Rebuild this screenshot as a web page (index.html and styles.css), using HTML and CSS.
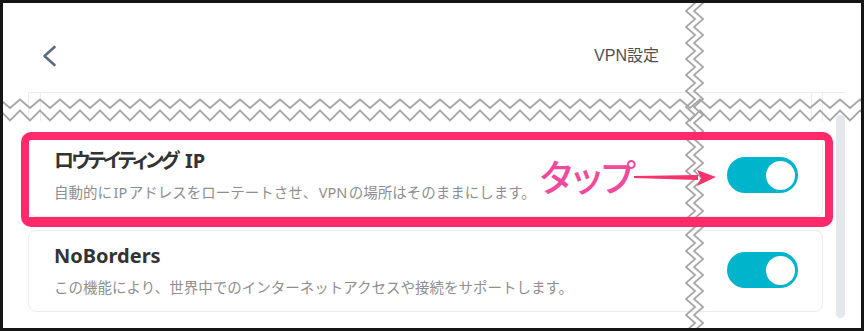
FILE: index.html
```html
<!DOCTYPE html>
<html lang="ja">
<head>
<meta charset="utf-8">
<title>VPN設定</title>
<link rel="stylesheet" href="styles.css">
</head>
<body>
<div class="frame">
  <header class="header">
    <svg class="back" width="18" height="24" viewBox="0 0 18 24"><path d="M14.5 3 L4.5 12 L14.5 21" fill="none" stroke="#5b6b7e" stroke-width="2.6" stroke-linecap="round" stroke-linejoin="round"/></svg>
    <div class="title">VPN設定</div>
  </header>
  <div class="content">
    <div class="cards">
      <div class="prev"><div class="prev-inner"></div></div>
      <div class="card card-first">
        <div class="text">
          <div class="name"><span class="kana">ロウテイティング</span> IP</div>
          <div class="desc">自動的に<span class="lat">IP</span>アドレスをローテートさせ、<span class="lat">VPN</span>の場所はそのままにします。</div>
        </div>
        <div class="toggle"><span class="knob"></span></div>
      </div>
      <div class="card">
        <div class="text">
          <div class="name">NoBorders</div>
          <div class="desc">この機能により、世界中でのインターネットアクセスや接続をサポートします。</div>
        </div>
        <div class="toggle"><span class="knob"></span></div>
      </div>
    </div>
    <div class="scrollbar"></div>
  </div>

  <svg class="tear-h" width="858" height="27">
    <defs>
      <pattern id="zzh" patternUnits="userSpaceOnUse" x="17" y="0" width="20" height="27">
        <path d="M-10 10 L0 1.5 L10 10 L20 1.5 L30 10" fill="none" stroke="#a6a6a6" stroke-width="1.8"/>
        <path d="M-10 22.5 L0 12.5 L10 22.5 L20 12.5 L30 22.5" fill="none" stroke="#a6a6a6" stroke-width="1.8"/>
      </pattern>
    </defs>
    <rect x="0" y="0" width="858" height="27" fill="url(#zzh)"/>
  </svg>

  <svg class="tear-v" width="26" height="325">
    <defs>
      <pattern id="zzv" patternUnits="userSpaceOnUse" x="0" y="0" width="26" height="16">
        <path d="M4 -8 L13 0 L4 8 L13 16 L4 24" fill="none" stroke="#a6a6a6" stroke-width="1.8"/>
        <path d="M12 -8 L21 0 L12 8 L21 16 L12 24" fill="none" stroke="#a6a6a6" stroke-width="1.8"/>
      </pattern>
    </defs>
    <rect x="0" y="0" width="26" height="325" fill="url(#zzv)"/>
  </svg>

  <div class="ring"></div>
  <div class="tap">タップ</div>
  <svg class="arrow" width="90" height="27" viewBox="0 0 90 27">
    <polygon points="4,11 68,10 68,15 4,13" fill="#f7336b"/>
    <polygon points="67,5 86,12 67,21 71,13" fill="#f7336b"/>
  </svg>
</div>
</body>
</html>
```

FILE: styles.css
```css
* { box-sizing: border-box; }

html, body {
  margin: 0;
  padding: 0;
  background: #ffffff;
}

body {
  font-family: "Liberation Sans", "Noto Sans CJK JP", sans-serif;
}

.frame {
  position: relative;
  width: 864px;
  height: 331px;
  border: 3px solid #151515;
  background: #ffffff;
  overflow: hidden;
}

.header {
  display: flex;
  align-items: center;
  height: 89px;
  padding: 16px 0 0 37px;
}

.back {
  display: block;
}

.title {
  margin-left: auto;
  margin-right: 202px;
  font-size: 16px;
  color: #505050;
  line-height: 20px;
}

.content {
  display: flex;
  margin-left: 25px;
  width: 817px;
  border-top: 1px solid #ebebf1;
}

.cards {
  width: 795px;
  display: flex;
  flex-direction: column;
}

.prev {
  height: 28px;
  border-left: 1px solid #ececf2;
  border-right: 1px solid #ececf2;
}

.prev-inner {
  height: 100%;
  margin: 0 10px 0 11px;
  border-left: 1px solid #ececf2;
  border-right: 1px solid #ececf2;
}

.card {
  display: flex;
  align-items: flex-start;
  height: 82px;
  margin-top: 13px;
  padding: 13px 24px 0 25px;
  border: 1px solid #ececf1;
  border-radius: 8px;
  background: #ffffff;
}

.card-first {
  margin-top: 14px;
}

.name {
  font-family: "Noto Sans", "Noto Sans CJK JP", sans-serif;
  font-feature-settings: "palt";
  font-size: 20px;
  line-height: 24px;
  font-weight: 700;
  color: #333333;
}

.kana {
  letter-spacing: -2.9px;
  margin-right: 3px;
}

.desc {
  margin-top: 9px;
  font-family: "Noto Sans", "Noto Sans CJK JP", sans-serif;
  font-size: 14.5px;
  line-height: 20px;
  color: #8e8e8e;
}

.lat {
  margin: 0 1.5px;
}

.toggle {
  position: relative;
  margin-left: auto;
  margin-top: 8px;
  width: 71px;
  height: 36px;
  border-radius: 18px;
  background: #00b4cc;
}

.knob {
  position: absolute;
  right: 3px;
  top: 3.5px;
  width: 29px;
  height: 29px;
  border-radius: 50%;
  background: #ffffff;
}

.scrollbar {
  margin-left: 13px;
  margin-top: 22px;
  width: 9px;
  height: 203px;
  border-radius: 5px;
  background: #e4e7eb;
}

.tear-h {
  position: absolute;
  left: 0;
  top: 95px;
}

.tear-v {
  position: absolute;
  left: 679px;
  top: 0;
}

.ring {
  position: absolute;
  left: 18px;
  top: 129px;
  width: 812px;
  height: 95px;
  border: 8px solid #ff2a6a;
  border-bottom-width: 10px;
  border-radius: 10px;
}

.tap {
  position: absolute;
  left: 537px;
  top: 155px;
  font-family: "Noto Sans CJK JP", sans-serif;
  font-feature-settings: "palt";
  font-size: 37px;
  line-height: 37px;
  font-weight: 500;
  color: #ef4a9c;
}

.arrow {
  position: absolute;
  left: 627px;
  top: 162px;
}
```
